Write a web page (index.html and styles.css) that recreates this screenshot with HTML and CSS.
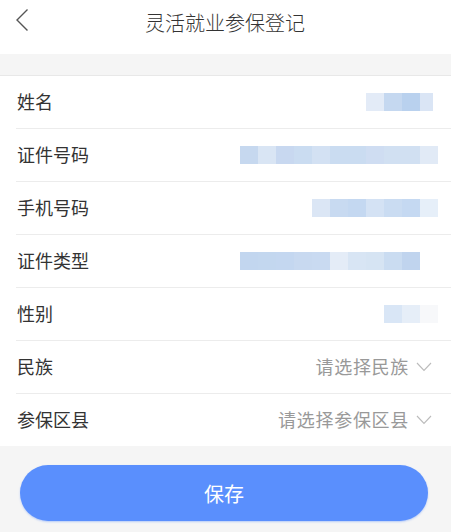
FILE: index.html
```html
<!DOCTYPE html>
<html lang="zh">
<head>
<meta charset="utf-8">
<link rel="stylesheet" href="styles.css">
</head>
<body>
<div class="page">
  <header class="header">
    <svg class="back" width="14" height="24" viewBox="0 0 14 24"><path d="M12.5 1.5 L2 12 L12.5 22.5" fill="none" stroke="#555" stroke-width="1.4"/></svg>
    <div class="title">灵活就业参保登记</div>
  </header>
  <div class="gap"></div>
  <div class="list">
    <div class="row"><span class="label">姓名</span>
      <div class="mosaic">
        <i style="background:#e3ebf7;width:18px"></i><i style="background:#c5d8f0;width:18px"></i><i style="background:#b9d1ee;width:18px"></i><i style="background:#dae5f5;width:13px"></i>
      </div>
    </div>
    <div class="row"><span class="label">证件号码</span>
      <div class="mosaic wide">
        <i style="background:#c6d8ef"></i><i style="background:#d9e5f4"></i><i style="background:#c8d8f0"></i><i style="background:#cadcf1"></i><i style="background:#d3e1f3"></i><i style="background:#cadcf1"></i><i style="background:#cadcf1"></i><i style="background:#cfddf2"></i><i style="background:#d1e0f2"></i><i style="background:#d1e0f2"></i><i style="background:#e1eaf6"></i>
      </div>
    </div>
    <div class="row"><span class="label">手机号码</span>
      <div class="mosaic wide">
        <i style="background:#dbe6f5"></i><i style="background:#c8daf1"></i><i style="background:#c4d8f1"></i><i style="background:#d4e2f4"></i><i style="background:#cadcf2"></i><i style="background:#c5d9f2"></i><i style="background:#e6eff9"></i>
      </div>
    </div>
    <div class="row"><span class="label">证件类型</span>
      <div class="mosaic wide type">
        <i style="background:#c2d6ef"></i><i style="background:#c3d7ef"></i><i style="background:#c4d7f0"></i><i style="background:#c8d9f0"></i><i style="background:#c9daf1"></i><i style="background:#e4ecf7"></i><i style="background:#d8e5f4"></i><i style="background:#d6e4f3"></i><i style="background:#cadcf1"></i><i style="background:#c0d4ee"></i>
      </div>
    </div>
    <div class="row"><span class="label">性别</span>
      <div class="mosaic wide">
        <i style="background:#d9e6f6"></i><i style="background:#e6eef8"></i><i style="background:#f7f8fa"></i>
      </div>
    </div>
    <div class="row"><span class="label">民族</span>
      <div class="select"><span class="ph">请选择民族</span>
        <svg class="chev" width="16" height="10" viewBox="0 0 16 10"><path d="M1 1 L8 8.5 L15 1" fill="none" stroke="#bbb" stroke-width="1.1"/></svg>
      </div>
    </div>
    <div class="row"><span class="label">参保区县</span>
      <div class="select"><span class="ph">请选择参保区县</span>
        <svg class="chev" width="16" height="10" viewBox="0 0 16 10"><path d="M1 1 L8 8.5 L15 1" fill="none" stroke="#bbb" stroke-width="1.1"/></svg>
      </div>
    </div>
  </div>
  <div class="footer">
    <button class="save">保存</button>
  </div>
</div>
</body>
</html>
```
FILE: styles.css
```css
* { box-sizing: border-box; }
html, body { margin: 0; padding: 0; }
body {
  width: 451px;
  height: 532px;
  overflow: hidden;
  background: #f5f5f5;
  font-family: "Noto Sans CJK SC", "Noto Sans", sans-serif;
  color: #333;
}
.header {
  height: 54px;
  background: #fff;
  display: flex;
  align-items: center;
  justify-content: center;
  position: relative;
}
.back {
  position: absolute;
  left: 15px;
  top: 8px;
}
.title {
  font-size: 20px;
  color: #333;
  font-weight: 300;
  margin-left: -1px;
  margin-top: -10px;
}
.gap { height: 21px; }
.list {
  background: #fff;
  border-top: 1px solid #e8e8e8;
  padding-left: 16px;
}
.row {
  height: 53px;
  display: flex;
  align-items: center;
  justify-content: space-between;
  border-top: 1px solid #ececec;
  padding-bottom: 3px;
}
.row:first-child { border-top: none; height: 52px; }
.label {
  font-size: 18px;
  color: #333;
  padding-left: 1px;
}
.mosaic {
  display: flex;
  height: 18px;
  margin-right: 18px;
  margin-top: 2px;
}
.mosaic i { display: block; height: 18px; width: 18px; }
.mosaic.wide { margin-right: 13px; }
.mosaic.type { margin-right: 31px; }
.select {
  display: flex;
  align-items: center;
  margin-right: 19px;
}
.ph {
  font-size: 18px;
  letter-spacing: 0.7px;
  color: #999;
}
.chev { margin-left: 7px; margin-top: 3px; }
.footer {
  padding: 19px 0 0 20px;
}
.save {
  width: 408px;
  height: 56px;
  border: none;
  border-radius: 28px;
  background: #5a8ffd;
  color: #fff;
  font-family: "Noto Sans CJK SC", "Noto Sans", sans-serif;
  font-size: 20px;
  box-shadow: 0 1px 2px rgba(90,143,253,0.4);
}
```
